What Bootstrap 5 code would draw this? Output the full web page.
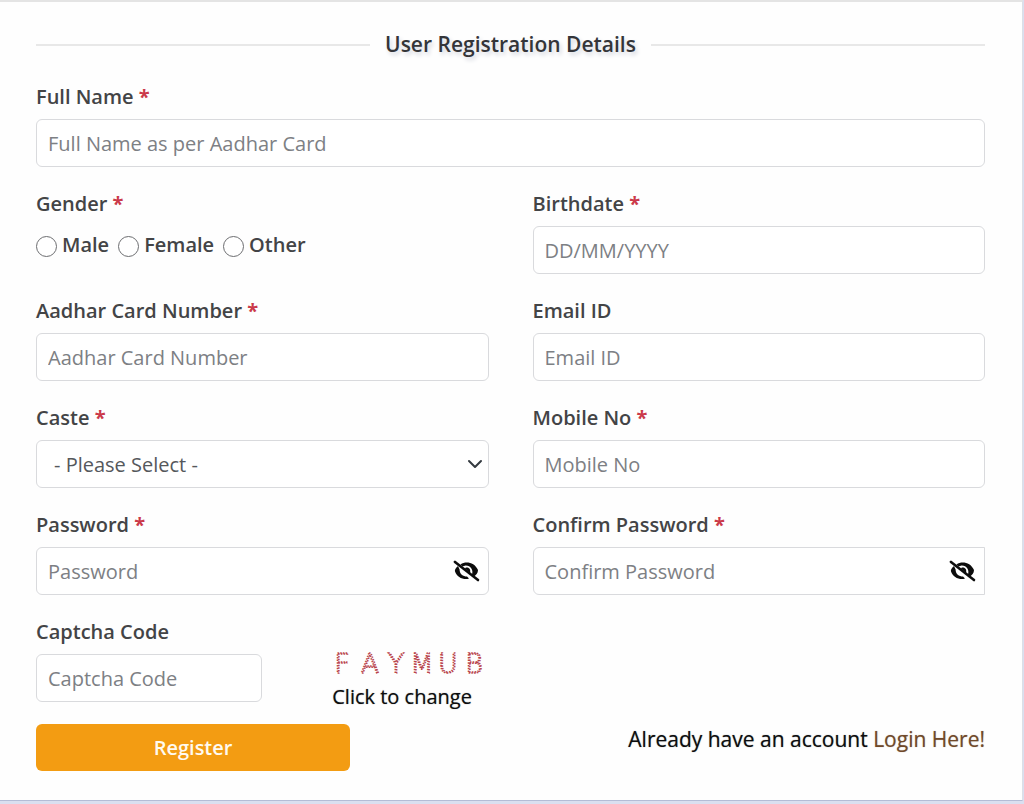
<!DOCTYPE html>
<html lang="en">
<head>
<meta charset="utf-8">
<meta name="viewport" content="width=device-width, initial-scale=1">
<title>User Registration</title>
<link href="https://cdn.jsdelivr.net/npm/bootstrap@5.3.0/dist/css/bootstrap.min.css" rel="stylesheet">
<style>
  body { font-family: "Open Sans", "Noto Sans", sans-serif; font-size: 20px; line-height: 30px; color: #1d1e20; background: #dadff0; }
  .sheet { background: #fefefe; border-top: 2px solid #e4e4e4; border-right: 1px solid #dcdfe6; border-bottom: 1px solid #b4bcd6; margin-right: 1px; padding: 27px 37px 29px 36px; }
  .section-title { font-size: 21px; line-height: 30px; font-weight: 600; color: #343539; text-shadow: 2px 3px 4px #d3d6de; gap: 15px; margin-bottom: 23px; }
  .section-title .rule { height: 2px; margin-top: 2px; background: #e8e8e8; }
  .fields { --bs-gutter-x: 44px; --bs-gutter-y: 22px; }
  .form-label { font-weight: 600; color: #434446; margin-bottom: 7px; display: block; }
  .req { color: #cb3a4a; font-weight: 700; }
  .form-control, .form-select { font-size: 20px; line-height: 30px; height: 48px; padding: 7px 11px; border: 1px solid #d9dadd; border-radius: 6px; background-color: #fff; }
  .form-control::placeholder { color: #7d8084; opacity: 1; }
  .form-select { color: #55585c; padding: 9px 17px 7px; background-position: right 5px center; background-size: 16px 16px; }
  .genders { gap: 9px; font-weight: 600; color: #434446; line-height: 30px; padding-top: 4px; }
  .genders label { gap: 5px; }
  .genders .form-check-input { width: 21px; height: 21px; margin: 3px 0 0; border: 1px solid #6c6d70; flex: none; }
  .has-eye .form-control { padding-right: 48px; }
  .eye-btn { position: absolute; right: 9px; top: 10px; padding: 0; border: 0; background: none; line-height: 0; color: #0c0c0c; }
  .square-end { border-top-right-radius: 0; border-bottom-right-radius: 0; }
  .captcha { margin: 0 0 -9px 66px; color: #0c0d0e; font-size: 20px; line-height: 28px; padding: 0 0 0 4px; border: 0; background: none; text-shadow: 0 0 1px #0c0d0e80; }
  .captcha svg { display: block; margin: 0 0 2px -4px; }
  .captcha text { font: 200 27px "DejaVu Sans", "DejaVu Sans Light", sans-serif; text-anchor: middle; text-shadow: none; }
  .btn-register { width: 33.1%; height: 47px; font-size: 20px; line-height: 30px; font-weight: 600; padding: 8px; border: 0; border-radius: 6px; background: #f39c12; color: #fffaf0; }
  .btn-register:hover { background: #dd8d0e; color: #fff; }
  .actions { margin-top: 22px; }
  .signin { font-size: 21px; color: #0c0d0e; text-shadow: 0 0 1px #0c0d0e80; }
  .signin a { color: #70492a; text-decoration: none; text-shadow: 0 0 1px #70492a80; }
</style>
</head>
<body>
<svg width="0" height="0" class="position-absolute" aria-hidden="true">
  <symbol id="eye-off" viewBox="0 0 28 28">
    <path d="M6 9C3.500 11 2.500 13 3 14.500C5 19.500 9.500 22.500 15.500 22L17 21.500L15 19.600C11 19.600 7.500 17 7.600 12.500Z" fill="currentColor"/>
    <path d="M8.500 7.500C14 3.800 22.500 5.500 26 13C26 16 24 18.500 21.500 19.700L19.800 18C22 13 18.500 8.200 13.500 8.400L10.500 9.400Z" fill="currentColor"/>
    <path d="M13 11.500C13.500 9.500 19.500 10 18 16Z" fill="currentColor"/>
    <path d="M3 5L26 23" stroke="currentColor" stroke-width="2.600" stroke-linecap="round"/>
  </symbol>
</svg>
<main class="sheet">
  <form>
    <h1 class="section-title d-flex align-items-center">
      <span class="rule flex-grow-1"></span>User Registration Details<span class="rule flex-grow-1"></span>
    </h1>
    <div class="row fields">
      <div class="col-12">
        <label class="form-label" for="fullname">Full Name <span class="req">*</span></label>
        <input class="form-control" id="fullname" type="text" placeholder="Full Name as per Aadhar Card">
      </div>
      <div class="col-6" role="radiogroup" aria-labelledby="gender-label">
        <span class="form-label" id="gender-label">Gender <span class="req">*</span></span>
        <div class="genders d-flex">
          <label class="d-flex align-items-center"><input class="form-check-input" type="radio" name="gender">Male</label>
          <label class="d-flex align-items-center"><input class="form-check-input" type="radio" name="gender">Female</label>
          <label class="d-flex align-items-center"><input class="form-check-input" type="radio" name="gender">Other</label>
        </div>
      </div>
      <div class="col-6">
        <label class="form-label" for="birth">Birthdate <span class="req">*</span></label>
        <input class="form-control" id="birth" type="text" placeholder="DD/MM/YYYY">
      </div>
      <div class="col-6">
        <label class="form-label" for="aadhar">Aadhar Card Number <span class="req">*</span></label>
        <input class="form-control" id="aadhar" type="text" placeholder="Aadhar Card Number">
      </div>
      <div class="col-6">
        <label class="form-label" for="email">Email ID</label>
        <input class="form-control" id="email" type="email" placeholder="Email ID">
      </div>
      <div class="col-6">
        <label class="form-label" for="caste">Caste <span class="req">*</span></label>
        <select class="form-select" id="caste"><option>- Please Select -</option></select>
      </div>
      <div class="col-6">
        <label class="form-label" for="mobile">Mobile No <span class="req">*</span></label>
        <input class="form-control" id="mobile" type="tel" placeholder="Mobile No">
      </div>
      <div class="col-6">
        <label class="form-label" for="pass">Password <span class="req">*</span></label>
        <div class="has-eye position-relative">
          <input class="form-control" id="pass" type="password" placeholder="Password">
          <button class="eye-btn" type="button" aria-label="Show password"><svg width="28" height="28"><use href="#eye-off"/></svg></button>
        </div>
      </div>
      <div class="col-6">
        <label class="form-label" for="confirm">Confirm Password <span class="req">*</span></label>
        <div class="has-eye position-relative">
          <input class="form-control square-end" id="confirm" type="password" placeholder="Confirm Password">
          <button class="eye-btn" type="button" aria-label="Show password"><svg width="28" height="28"><use href="#eye-off"/></svg></button>
        </div>
      </div>
      <div class="col-6 d-flex align-items-end">
        <div class="w-50 flex-shrink-0">
          <label class="form-label" for="captcha">Captcha Code</label>
          <input class="form-control" id="captcha" type="text" placeholder="Captcha Code">
        </div>
        <button class="captcha text-start" type="button">
          <svg width="162" height="36" role="img" aria-label="Captcha">
            <text x="14 42 68 94 120 146" y="28" fill="none" stroke="#b8434b" stroke-width="1.500" stroke-dasharray="1.500 1.200">FAYMUB</text>
          </svg>
          Click to change
        </button>
      </div>
    </div>
    <div class="actions d-flex justify-content-between align-items-start">
      <button class="btn btn-register" type="submit">Register</button>
      <div class="signin">Already have an account <a href="#login">Login Here!</a></div>
    </div>
  </form>
</main>
<script src="https://cdn.jsdelivr.net/npm/bootstrap@5.3.0/dist/js/bootstrap.bundle.min.js"></script>
</body>
</html>
